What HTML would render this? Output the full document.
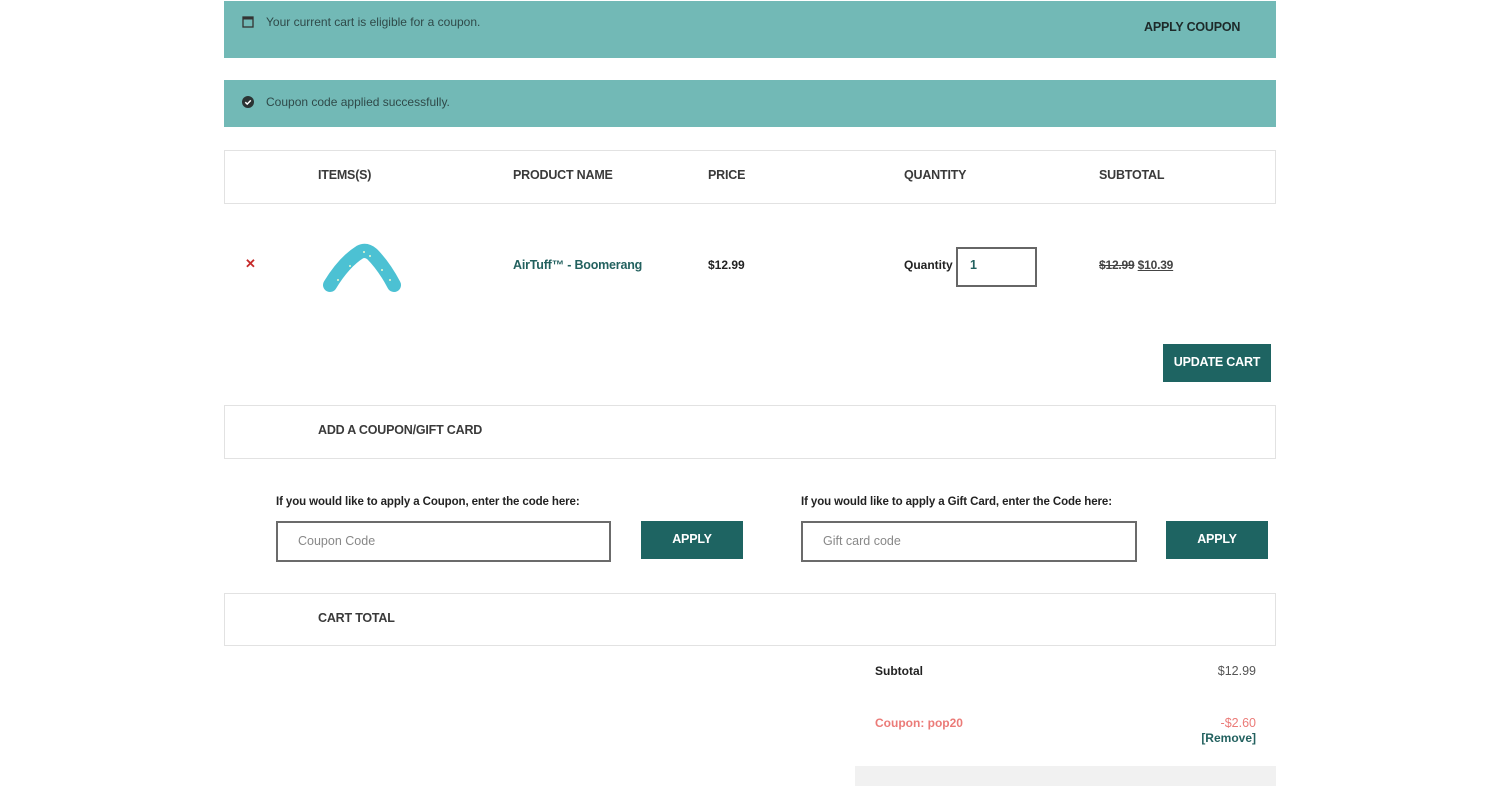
<!DOCTYPE html>
<html><head><meta charset="utf-8"><style>
*{margin:0;padding:0;box-sizing:border-box}
body{width:1500px;height:786px;background:#fff;font-family:"Liberation Sans",sans-serif;color:#333;position:relative;overflow:hidden}
.a{position:absolute;white-space:nowrap}
.bar{position:absolute;left:224px;width:1052px;background:#72b9b6}
.box{position:absolute;left:224px;width:1052px;border:1px solid #e2e2e2}
.h{font-weight:bold;font-size:12.5px;color:#3a3a3a;letter-spacing:-0.2px}
.btn{position:absolute;background:#1e6462;color:#fff;font-weight:bold;font-size:12.5px;text-align:center;letter-spacing:-0.2px}
.inp{position:absolute;border:2px solid #6b6b6b;background:#fff;font-size:12.5px;color:#888;padding-left:20px}
</style></head><body>
<div class="bar" style="top:1px;height:57px"></div>
<svg class="a" style="left:242px;top:16px" width="12" height="12" viewBox="0 0 12 12"><rect x="1" y="1" width="10" height="10" fill="none" stroke="#333" stroke-width="1.3"/><rect x="1" y="1" width="10" height="2.5" fill="#333"/></svg>
<div class="a" style="left:266px;top:15px;font-size:12px;color:#2f4a49">Your current cart is eligible for a coupon.</div>
<div class="a h" style="left:1144px;top:20px;color:#1d2a2a">APPLY COUPON</div>
<div class="bar" style="top:80px;height:47px"></div>
<svg class="a" style="left:242px;top:96px" width="12" height="12" viewBox="0 0 12 12"><circle cx="6" cy="6" r="6" fill="#2b3333"/><path d="M3.3 6.2l1.9 1.9 3.6-3.7" stroke="#fff" stroke-width="1.5" fill="none"/></svg>
<div class="a" style="left:266px;top:95px;font-size:12px;color:#2f4a49">Coupon code applied successfully.</div>

<div class="box" style="top:150px;height:54px"></div>
<div class="a h" style="left:318px;top:168px">ITEMS(S)</div>
<div class="a h" style="left:513px;top:168px">PRODUCT NAME</div>
<div class="a h" style="left:708px;top:168px">PRICE</div>
<div class="a h" style="left:904px;top:168px">QUANTITY</div>
<div class="a h" style="left:1099px;top:168px">SUBTOTAL</div>

<div class="a" style="left:245px;top:256px;color:#c62a2a;font-weight:bold;font-size:13px">✕</div>
<svg class="a" style="left:320px;top:240px" width="84" height="56" viewBox="0 0 84 56"><path d="M10 45 Q24 22 40 12 Q46 9 52 14 Q64 26 74 45" fill="none" stroke="#4cc1d3" stroke-width="14" stroke-linecap="round" stroke-linejoin="round"/><g fill="#eef8d0"><circle cx="30" cy="26" r="1"/><circle cx="50" cy="16" r="1"/><circle cx="62" cy="30" r="1"/><circle cx="18" cy="40" r="1"/><circle cx="44" cy="12" r="1"/><circle cx="70" cy="40" r="1"/></g></svg>
<div class="a" style="left:513px;top:258px;font-weight:bold;font-size:12.5px;color:#23615f;letter-spacing:-0.2px">AirTuff™ - Boomerang</div>
<div class="a" style="left:708px;top:258px;font-weight:bold;font-size:12px;color:#222">$12.99</div>
<div class="a" style="left:904px;top:258px;font-weight:bold;font-size:12px;color:#222">Quantity</div>
<div class="a" style="left:956px;top:247px;width:81px;height:40px;border:2px solid #666"></div>
<div class="a" style="left:970px;top:258px;font-weight:bold;font-size:12.5px;color:#23615f">1</div>
<div class="a" style="left:1099px;top:258px;font-weight:bold;font-size:12px;color:#444;letter-spacing:-0.2px"><s>$12.99</s> <u>$10.39</u></div>
<div class="btn" style="left:1163px;top:344px;width:108px;height:38px;line-height:36px">UPDATE CART</div>

<div class="box" style="top:405px;height:54px"></div>
<div class="a h" style="left:318px;top:423px">ADD A COUPON/GIFT CARD</div>
<div class="a" style="left:276px;top:496px;font-weight:bold;font-size:11.5px;color:#222;letter-spacing:-0.1px">If you would like to apply a Coupon, enter the code here:</div>
<div class="inp" style="left:276px;top:521px;width:335px;height:41px;line-height:37px">Coupon Code</div>
<div class="btn" style="left:641px;top:521px;width:102px;height:38px;line-height:36px">APPLY</div>
<div class="a" style="left:801px;top:496px;font-weight:bold;font-size:11.5px;color:#222;letter-spacing:-0.1px">If you would like to apply a Gift Card, enter the Code here:</div>
<div class="inp" style="left:801px;top:521px;width:336px;height:41px;line-height:37px">Gift card code</div>
<div class="btn" style="left:1166px;top:521px;width:102px;height:38px;line-height:36px">APPLY</div>

<div class="box" style="top:593px;height:53px"></div>
<div class="a h" style="left:318px;top:611px">CART TOTAL</div>
<div class="a" style="left:875px;top:664px;font-weight:bold;font-size:12px;color:#222">Subtotal</div>
<div class="a" style="left:1200px;top:664px;width:56px;text-align:right;font-size:12.5px;color:#555">$12.99</div>
<div class="a" style="left:875px;top:716px;font-weight:bold;font-size:12px;color:#eb7b78">Coupon: pop20</div>
<div class="a" style="left:1200px;top:716px;width:56px;text-align:right;font-size:12.5px;color:#eb7b78">-$2.60</div>
<div class="a" style="left:1190px;top:731px;width:66px;text-align:right;font-size:12px;font-weight:bold;color:#23615f">[Remove]</div>
<div class="a" style="left:855px;top:766px;width:421px;height:20px;background:#f1f1f1"></div>
</body></html>
